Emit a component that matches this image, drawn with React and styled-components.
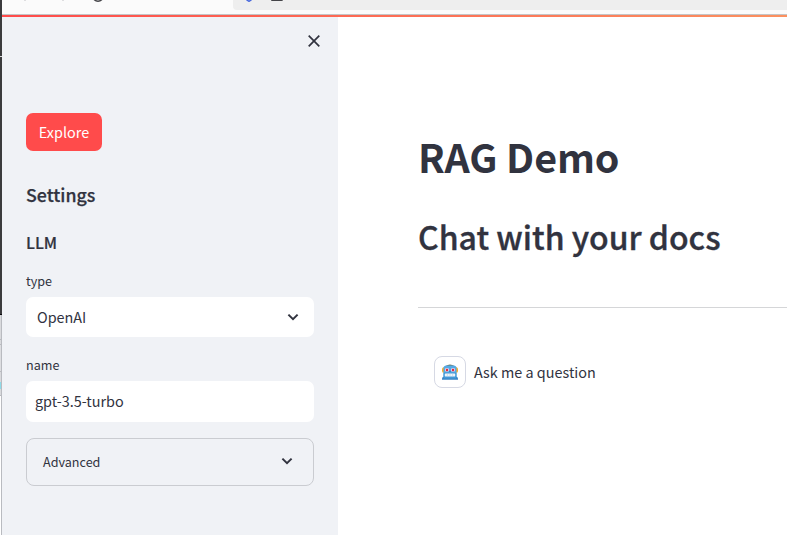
import React from 'react';
import styled, { createGlobalStyle } from 'styled-components';

const GlobalStyle = createGlobalStyle`
  * { box-sizing: border-box; }
  body {
    margin: 0;
    background: #fff;
    color: #31333f;
    font-family: "Source Sans Pro", "Noto Sans CJK SC", sans-serif;
    font-size: 14.4px;
    overflow: hidden;
  }
  h1, h2, h3, h4 { margin: 0; white-space: nowrap; }
`;

const Screen = styled.div`
  display: flex;
  width: 100%;
  height: 535px;
  overflow: hidden;
`;

const DesktopEdge = styled.div`
  flex: none;
  width: 2px;
  background:
    linear-gradient(#b9bbc0, #b9bbc0) 1px 315px / 1px 220px no-repeat,
    linear-gradient(#3b3b3d 0 56px, #d8d8d8 56px 57px, #3b3b3d 57px 314px, #08080c 314px 315px,
    #d9dadd 315px 339px, #b9bbc0 339px 340px, #d9dadd 340px 344px, #b9bbc0 344px 345px,
    #dddee1 345px 371px, #b9bbc0 371px 372px, #d9dadd 372px 382px, #8edbe8 382px 389px,
    #d9dadd 389px 395px, #b9bbc0 395px 396px, #fff 396px);
`;

const Browser = styled.div`
  flex: 1;
  min-width: 0;
  display: flex;
  flex-direction: column;
`;

const Toolbar = styled.div`
  flex: none;
  height: 15px;
  display: flex;
  align-items: flex-start;
  background: #fbfbfb;
  border-bottom: 1px solid #c4c4c5;
`;

const NavIcons = styled.svg`
  flex: none;
  width: 231px;
  height: 14px;
`;

const AddressBar = styled.div`
  flex: 1;
  height: 10px;
  background: #eeeeee;
  border-radius: 0 0 0 4px;
  svg { display: block; }
`;

const Decoration = styled.div`
  flex: none;
  height: 2px;
  background: linear-gradient(90deg, #ff4b4b, #fb9160);
`;

const Page = styled.div`
  flex: 1;
  display: flex;
  min-height: 0;
`;

const Sidebar = styled.aside`
  flex: none;
  width: 336px;
  background: #f0f2f6;
  padding: 0 24px;
  display: flex;
  flex-direction: column;
`;

const CloseRow = styled.div`
  height: 96px;
  padding: 18px 5px 0 0;
  margin-right: -11px;
  display: flex;
  justify-content: flex-end;
  svg { display: block; }
`;

const ExploreButton = styled.button`
  align-self: flex-start;
  width: 76px;
  height: 38px;
  padding: 0;
  border: 0;
  border-radius: 7px;
  background: #ff4b4b;
  color: #fff;
  font: inherit;
  line-height: 38px;
`;

const SectionTitle = styled.h3`
  margin-top: 29px;
  font-size: 17.8px;
  font-weight: 500;
  -webkit-text-stroke: 0.25px currentColor;
  line-height: 28px;
`;

const GroupTitle = styled.h4`
  margin-top: 21px;
  font-size: 16px;
  font-weight: 500;
  -webkit-text-stroke: 0.2px currentColor;
  line-height: 26px;
`;

const Label = styled.label`
  margin-top: ${(p) => p.$gap}px;
  font-size: 12.6px;
  line-height: 20px;
`;

const Field = styled.div`
  flex: none;
  display: flex;
  align-items: center;
  justify-content: space-between;
  height: ${(p) => p.$height}px;
  margin-top: 6px;
  padding: 0 15px 0 ${(p) => p.$inset}px;
  border-radius: 7px;
  background: #fff;
`;

const Expander = styled.div`
  flex: none;
  display: flex;
  align-items: center;
  justify-content: space-between;
  height: 48px;
  margin-top: 16px;
  padding: 0 20px 2px 16px;
  border: 1px solid #caccd1;
  border-radius: 8px;
  font-size: 12.6px;
`;

const Value = styled.span`
  padding-bottom: 2px;
`;

const Main = styled.main`
  flex: 1;
  min-width: 0;
  padding: 0 0 0 80px;
  background: #fff;
`;

const Title = styled.h1`
  padding-top: 112px;
  font-size: 39.4px;
  font-weight: 700;
  letter-spacing: -0.1px;
  line-height: 53px;
`;

const Subtitle = styled.h2`
  margin-top: 33px;
  font-size: 32px;
  font-weight: 500;
  -webkit-text-stroke: 0.35px currentColor;
  line-height: 43px;
`;

const Divider = styled.hr`
  height: 1px;
  margin: 49px 0 48px;
  border: 0;
  background: #d5d6d8;
`;

const Message = styled.div`
  display: flex;
  align-items: center;
  gap: 8px;
  padding-left: 16px;
`;

const Avatar = styled.div`
  display: flex;
  align-items: center;
  justify-content: center;
  width: 32px;
  height: 32px;
  border: 1px solid #d6d9e4;
  border-radius: 8px;
`;

function Chevron() {
  return (
    <svg width="12" height="8" viewBox="0 0 12 8" fill="none" stroke="#31333f" strokeWidth="2">
      <path d="M1.400 1.600 6 6.100l4.600-4.500" />
    </svg>
  );
}

function Robot() {
  return (
    <svg width="18" height="18" viewBox="0 0 18 18">
      <path d="M4.500 3Q9 0 13.500 3v2h-9Z" fill="#687461" />
      <rect x="1" y="4" width="16" height="6" rx="2.5" fill="#f5ae2b" />
      <path d="M2.500 5Q2.500 2.500 5.500 2.500h7q3 0 3 2.500v9h-13Z" fill="#55a9e5" />
      <path d="M1 16.800v-1.300q0-1.800 2-1.800h12q2 0 2 1.800v1.300Z" fill="#3984c6" />
      <rect x="2.5" y="9.5" width="13" height="6" rx="1" fill="#4299d8" />
      <rect x="4" y="5.2" width="4" height="3.4" rx="1" fill="#e9dce8" />
      <rect x="10" y="5.2" width="4" height="3.4" rx="1" fill="#e9dce8" />
      <circle cx="6" cy="6.900" r="1.250" fill="#e32746" />
      <circle cx="12" cy="6.900" r="1.250" fill="#e32746" />
      <path d="m9 7.500.900 1.500H8.100Z" fill="#2773ad" />
      <rect x="3.8" y="10.4" width="10.4" height="3.2" rx=".7" fill="#edf4fa" />
      <path d="M6.400 10.400v3.200M9 10.400v3.200M11.600 10.400v3.200" stroke="#a8cbe5" strokeWidth=".5" />
    </svg>
  );
}

export default function App() {
  return (
    <>
      <GlobalStyle />
      <Screen>
        <DesktopEdge />
        <Browser>
          <Toolbar>
            <NavIcons viewBox="0 0 231 14">
              <path d="M22 0h2M60 0h2" stroke="#dedee0" strokeWidth="2" />
              <circle cx="96" cy="-4" r="5.2" fill="none" stroke="#444448" strokeWidth="1.4" />
            </NavIcons>
            <AddressBar>
              <svg width="60" height="10" viewBox="0 0 60 10" fill="none">
                <path d="M12.500-2q.5 2 3.500 3.300Q19 0 19.500-2" fill="#aebdf5" stroke="#4868dc" strokeWidth="1.3" />
                <path d="M38.500-2v1.500q0 1 1 1h9q1 0 1-1V-2" stroke="#444448" strokeWidth="1.2" />
              </svg>
            </AddressBar>
          </Toolbar>
          <Decoration />
          <Page>
            <Sidebar>
              <CloseRow>
                <svg width="12" height="12" viewBox="0 0 12 12" stroke="#31333f" strokeWidth="1.7">
                  <path d="m.700.700 10.600 10.600M11.300.700.700 11.300" />
                </svg>
              </CloseRow>
              <ExploreButton>Explore</ExploreButton>
              <SectionTitle>Settings</SectionTitle>
              <GroupTitle>LLM</GroupTitle>
              <Label $gap={16}>type</Label>
              <Field $height={40} $inset={11}>
                <Value>OpenAI</Value>
                <Chevron />
              </Field>
              <Label $gap={18}>name</Label>
              <Field $height={41} $inset={9}>
                <Value>gpt-3.5-turbo</Value>
              </Field>
              <Expander>
                <span>Advanced</span>
                <Chevron />
              </Expander>
            </Sidebar>
            <Main>
              <Title>RAG Demo</Title>
              <Subtitle>Chat with your docs</Subtitle>
              <Divider />
              <Message>
                <Avatar><Robot /></Avatar>
                <Value>Ask me a question</Value>
              </Message>
            </Main>
          </Page>
        </Browser>
      </Screen>
    </>
  );
}
